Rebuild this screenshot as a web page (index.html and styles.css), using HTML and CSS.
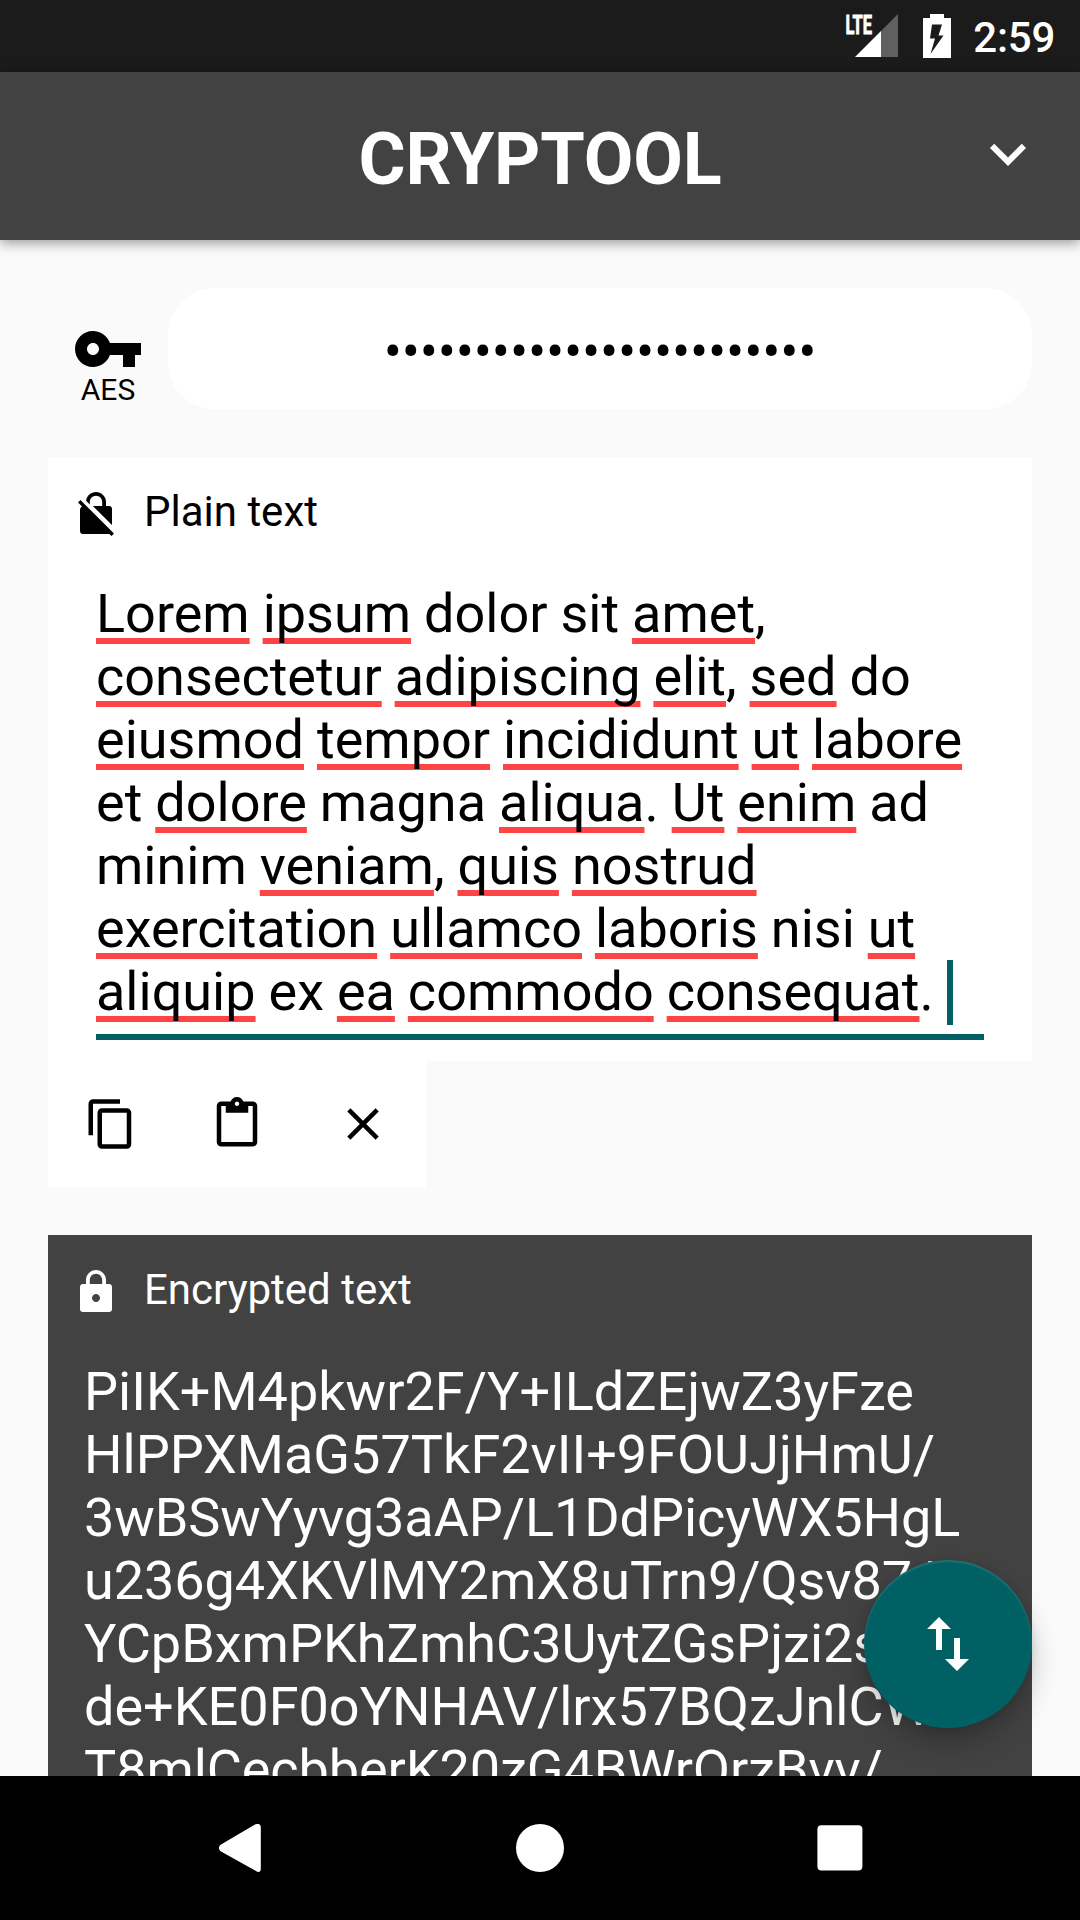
FILE: index.html
```html
<!DOCTYPE html>
<html lang="en">
<head>
<meta charset="utf-8">
<title>Cryptool</title>
<link rel="stylesheet" href="styles.css">
</head>
<body>
<div class="screen">
  <div class="status-bar">
    <svg class="signal" width="54" height="44" viewBox="0 0 54 44">
      <text class="lte" x="0.500" y="19.500" textLength="26.500" lengthAdjust="spacingAndGlyphs">LTE</text>
      <path fill="#fff" d="M10 43L36 17V43z"/>
      <path fill="#606060" d="M36 17L53 0V43H36z"/>
    </svg>
    <svg class="battery" width="28" height="44" viewBox="0 0 28 44">
      <path fill="#fff" fill-rule="evenodd" d="M7 0H21V4H28V44H0V4H7zM9 10.500L7 24.500H12L7.500 40L20.500 21.500H15.500L19 10.500z"/>
    </svg>
    <span class="clock">2:59</span>
  </div>

  <header class="app-bar">
    <h1 class="title">CRYPTOOL</h1>
    <svg class="chevron" width="72" height="72" viewBox="0 0 24 24"><path d="M16.590 8.590L12 13.170 7.410 8.590 6 10l6 6 6-6z"/></svg>
  </header>

  <main class="content">
    <section class="key-row">
      <div class="algorithm">
        <svg width="72" height="72" viewBox="0 0 24 24"><path d="M12.650 10C11.830 7.670 9.610 6 7 6c-3.310 0-6 2.690-6 6s2.690 6 6 6c2.610 0 4.830-1.670 5.650-4H17v4h4v-4h2v-4H12.650zM7 14c-1.100 0-2-.9-2-2s.9-2 2-2 2 .9 2 2-.9 2-2 2z"/></svg>
        <span class="algorithm-name">AES</span>
      </div>
      <div class="password">••••••••••••••••••••••••</div>
    </section>

    <section class="plain">
      <div class="card">
        <div class="card-head">
          <svg width="48" height="48" viewBox="0 0 24 24"><path d="M21 21.780L4.220 5 3 6.220l2.040 2.040C4.420 8.600 4 9.250 4 10v10.500c0 .9.600 1.500 1.500 1.500h13.160L19.780 23 21 21.780zM8.900 6c0-1.710 1.390-3.100 3.100-3.100s3.100 1.390 3.100 3.100v2h-4.660L20 17.560V9.500c0-.9-.6-1.500-1.500-1.500H17V6c0-2.760-2.240-5-5-5-2.560 0-4.640 1.930-4.940 4.400L8.900 7.240V6z"/></svg>
          <span class="card-label">Plain text</span>
        </div>
        <div class="editor">
          <u>Lorem</u> <u>ipsum</u> dolor sit <u>amet</u>,<br>
          <u>consectetur</u> <u>adipiscing</u> <u>elit</u>, <u>sed</u> do<br>
          <u>eiusmod</u> <u>tempor</u> <u>incididunt</u> <u>ut</u> <u>labore</u><br>
          et <u>dolore</u> magna <u>aliqua</u>. <u>Ut</u> <u>enim</u> ad<br>
          minim <u>veniam</u>, <u>quis</u> <u>nostrud</u><br>
          <u>exercitation</u> <u>ullamco</u> <u>laboris</u> nisi <u>ut</u><br>
          <u>aliquip</u> ex <u>ea</u> <u>commodo</u> <u>consequat</u>.&nbsp;<span class="caret"></span>
        </div>
      </div>
      <div class="actions">
        <svg width="54" height="54" viewBox="0 0 24 24"><path d="M16 1H4c-1.100 0-2 .9-2 2v14h2V3h12V1zm3 4H8c-1.100 0-2 .9-2 2v14c0 1.100.9 2 2 2h11c1.100 0 2-.9 2-2V7c0-1.100-.9-2-2-2zm0 16H8V7h11v14z"/></svg>
        <svg width="54" height="54" viewBox="0 0 24 24"><path d="M19 2h-4.180C14.400.84 13.300 0 12 0S9.600.84 9.180 2H5c-1.100 0-2 .9-2 2v16c0 1.100.9 2 2 2h14c1.100 0 2-.9 2-2V4c0-1.100-.9-2-2-2zm-7 0c.550 0 1 .450 1 1s-.450 1-1 1-1-.450-1-1 .450-1 1-1zm7 18H5V4h2v3h10V4h2v16z"/></svg>
        <svg width="54" height="54" viewBox="0 0 24 24"><path d="M19 6.410L17.590 5 12 10.590 6.410 5 5 6.410 10.590 12 5 17.590 6.410 19 12 13.410 17.590 19 19 17.590 13.410 12z"/></svg>
      </div>
    </section>

    <section class="card encrypted">
      <div class="card-head">
        <svg width="48" height="48" viewBox="0 0 24 24"><path d="M18.500 8H17V6c0-2.760-2.240-5-5-5S7 3.240 7 6v2H5.500C4.600 8 4 8.600 4 9.500v11c0 .9.600 1.500 1.500 1.500h13c.9 0 1.500-.6 1.500-1.500v-11c0-.9-.6-1.500-1.500-1.500zM12 17c-1.100 0-2-.9-2-2s.9-2 2-2 2 .9 2 2-.9 2-2 2zm3.100-9H8.900V6c0-1.710 1.390-3.100 3.100-3.100s3.100 1.390 3.100 3.100v2z"/></svg>
        <span class="card-label">Encrypted text</span>
      </div>
      <div class="cipher">PiIK+M4pkwr2F/Y+ILdZEjwZ3yFze<br>HlPPXMaG57TkF2vII+9FOUJjHmU/<br><span class="tight">3wBSwYyvg3aAP/L1DdPicyWX5HgL</span><br><span class="tight">u236g4XKVlMY2mX8uTrn9/Qsv87/</span><br>YCpBxmPKhZmhC3UytZGsPjzi2s<br>de+KE0F0oYNHAV/lrx57BQzJnlCW<br><span class="tight">T8mlCecbberK20zG4BWrQrzBvv/</span></div>
    </section>
  </main>

  <div class="fab">
    <svg width="72" height="72" viewBox="0 0 24 24"><path d="M9 3L5 6.990h3V14h2V6.990h3L9 3zm7 14.010V10h-2v7.010h-3L15 21l4-3.990h-3z"/></svg>
  </div>

  <nav class="nav-bar">
    <svg width="48" height="48" viewBox="0 0 48 48"><path d="M39 .6C41 -.6 44.800 -.4 44.800 3V45c0 3.400-2.800 3.600-4.800 2L5 27.500C2.300 25.500 2.300 22.500 5 20.500z"/></svg>
    <svg width="48" height="48" viewBox="0 0 48 48"><circle cx="24" cy="24" r="24"/></svg>
    <svg width="48" height="48" viewBox="0 0 48 48"><rect x="1.400" y="1.200" width="45" height="45.400" rx="4"/></svg>
  </nav>
</div>
</body>
</html>
```
FILE: styles.css
```css
* {
  box-sizing: border-box;
}

body {
  margin: 0;
  font-family: Roboto, sans-serif;
  color: #000;
}

svg {
  display: block;
  flex: none;
  fill: currentColor;
}

.screen {
  position: relative;
  display: flex;
  flex-direction: column;
  width: 1080px;
  height: 1920px;
  overflow: hidden;
  background: #fafafa;
}

.status-bar {
  flex: none;
  display: flex;
  align-items: flex-start;
  justify-content: flex-end;
  height: 72px;
  padding: 14px 25px 0 0;
  background: #1b1b1b;
  color: #fff;
}

.signal {
  overflow: visible;
}

.battery {
  margin: 0 22px 0 24px;
}

.lte {
  font-size: 26px;
  font-weight: 700;
  fill: #fff;
  stroke: #fff;
  stroke-width: 0.9px;
}

.clock {
  font-size: 42px;
  font-weight: 500;
  line-height: 48px;
  letter-spacing: -0.25px;
}

.app-bar {
  z-index: 1;
  flex: none;
  display: grid;
  grid-template-columns: 72px 1fr 72px;
  align-items: start;
  height: 168px;
  padding: 0 36px;
  background: #424242;
  color: #fff;
  box-shadow: 0 3px 12px rgba(0, 0, 0, 0.4);
}

.title {
  grid-column: 2;
  margin: 46px 0 0;
  font-size: 72px;
  font-weight: 700;
  line-height: 84px;
  letter-spacing: -0.2px;
  text-align: center;
}

.chevron {
  margin-top: 46px;
}

.content {
  flex: 1;
  min-height: 0;
  display: flex;
  flex-direction: column;
  gap: 48px;
  padding: 48px 48px 0;
  overflow: hidden;
}

.key-row {
  flex: none;
  display: flex;
  height: 121px;
}

.algorithm {
  display: flex;
  flex-direction: column;
  align-items: center;
  width: 120px;
  padding-top: 25px;
}

.algorithm-name {
  margin-top: -13px;
  font-size: 30px;
  line-height: 35px;
}

.password {
  flex: 1;
  padding-top: 32px;
  border-radius: 46px;
  background: #fff;
  font-size: 54px;
  line-height: 63px;
  letter-spacing: -0.2px;
  text-align: center;
}

.plain {
  flex: none;
}

.card {
  display: flex;
  flex-direction: column;
  background: #fff;
}

.card-head {
  display: flex;
  align-items: center;
  gap: 24px;
  height: 48px;
  margin: 33px 24px 0;
}

.card-label {
  font-size: 42px;
  line-height: 48px;
  margin-top: -4px;
}

.editor {
  margin: 44px 48px 21px;
  padding-bottom: 11px;
  border-bottom: 6px solid #006064;
  font-size: 54px;
  line-height: 63px;
  word-spacing: -0.45px;
  white-space: nowrap;
}

.editor u {
  text-decoration: underline 6px #f44;
  text-underline-offset: 6px;
  text-decoration-skip-ink: none;
}

.caret {
  position: relative;
}

.caret::after {
  content: "";
  position: absolute;
  left: 0;
  top: 0;
  width: 6px;
  height: 65px;
  background: #006064;
}

.actions {
  display: grid;
  grid-template-columns: repeat(3, 126px);
  place-items: center;
  width: 378px;
  height: 126px;
  background: #fff;
}

.encrypted {
  flex: none;
  background: #424242;
  color: #fff;
}

.cipher {
  padding: 44px 36px 0;
  font-size: 54px;
  line-height: 63px;
  white-space: nowrap;
}

.tight {
  letter-spacing: -0.08px;
}

.fab {
  position: absolute;
  z-index: 2;
  left: 864px;
  top: 1560px;
  display: grid;
  place-items: center;
  width: 168px;
  height: 168px;
  border-radius: 50%;
  background: #006064;
  color: #fff;
  box-shadow: 0 16px 28px rgba(0, 0, 0, 0.22), 0 2px 8px rgba(0, 0, 0, 0.12), inset 0 2px 2px rgba(255, 255, 255, 0.12);
}

.nav-bar {
  z-index: 3;
  flex: none;
  display: flex;
  align-items: center;
  justify-content: space-between;
  height: 144px;
  padding: 0 216px;
  background: #000;
  color: #fff;
}
```
